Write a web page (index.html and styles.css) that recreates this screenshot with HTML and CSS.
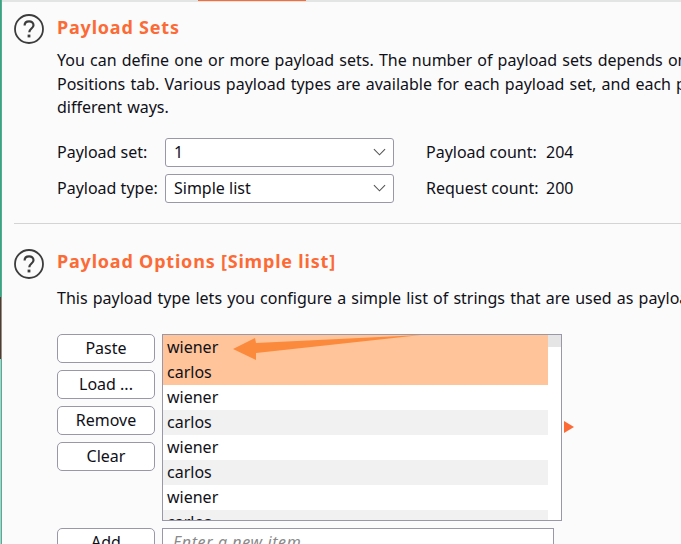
FILE: index.html
```html
<!DOCTYPE html>
<html lang="en">
<head>
    <meta charset="UTF-8">
    <meta name="viewport" content="width=device-width, initial-scale=1.0">
    <title>Payload Sets</title>
    <link rel="stylesheet" href="styles.css">
</head>
<body>
    <div class="edge">
        <div class="edge-green"></div>
        <div class="edge-red"></div>
    </div>
    <div class="main">
        <div class="top-bar"><div class="tab-mark"></div></div>

        <section class="sets">
            <div class="head">
                <svg class="help" viewBox="0 0 30 30"><circle cx="15" cy="15" r="14" fill="none" stroke="#3c3c3c" stroke-width="1.8"/><path d="M10.6 11.6c0-2.7 2-4.3 4.5-4.3s4.4 1.6 4.4 3.9c0 3.3-4.2 3.4-4.2 7" fill="none" stroke="#3c3c3c" stroke-width="2.2"/><rect x="13.6" y="20.6" width="2.8" height="2.8" fill="#3c3c3c"/></svg>
                <h2>Payload Sets</h2>
            </div>
            <p class="text">You can define one or more payload sets. The number of payload sets depends on<br>Positions tab. Various payload types are available for each payload set, and each p<br>different ways.</p>
            <div class="form">
                <div class="form-row">
                    <span class="label">Payload set:</span>
                    <div class="select"><span>1</span><svg class="chev" viewBox="0 0 14 8"><path d="M1 1l6 6 6-6" fill="none" stroke="#555" stroke-width="1.2"/></svg></div>
                    <span class="count-label">Payload count:</span>
                    <span>204</span>
                </div>
                <div class="form-row">
                    <span class="label">Payload type:</span>
                    <div class="select"><span>Simple list</span><svg class="chev" viewBox="0 0 14 8"><path d="M1 1l6 6 6-6" fill="none" stroke="#555" stroke-width="1.2"/></svg></div>
                    <span class="count-label">Request count:</span>
                    <span>200</span>
                </div>
            </div>
        </section>

        <section class="options">
            <div class="head">
                <svg class="help" viewBox="0 0 30 30"><circle cx="15" cy="15" r="14" fill="none" stroke="#3c3c3c" stroke-width="1.8"/><path d="M10.6 11.6c0-2.7 2-4.3 4.5-4.3s4.4 1.6 4.4 3.9c0 3.3-4.2 3.4-4.2 7" fill="none" stroke="#3c3c3c" stroke-width="2.2"/><rect x="13.6" y="20.6" width="2.8" height="2.8" fill="#3c3c3c"/></svg>
                <h2>Payload Options [Simple list]</h2>
            </div>
            <p class="text text-options">This payload type lets you configure a simple list of strings that are used as payloa</p>
            <div class="editor">
                <div class="buttons">
                    <button class="btn">Paste</button>
                    <button class="btn">Load ...</button>
                    <button class="btn">Remove</button>
                    <button class="btn">Clear</button>
                </div>
                <div class="list">
                    <div class="rows">
                        <div class="row sel">wiener</div>
                        <div class="row sel">carlos</div>
                        <div class="row">wiener</div>
                        <div class="row alt">carlos</div>
                        <div class="row">wiener</div>
                        <div class="row alt">carlos</div>
                        <div class="row">wiener</div>
                        <div class="row alt">carlos</div>
                    </div>
                    <div class="scroll"><div class="thumb"></div></div>
                    <svg class="arrow" viewBox="0 0 190 30"><polygon points="70,14 92,3 93,8 258,0 93,18 93,25" fill="#fb8a3c"/></svg>
                </div>
                <div class="marker"></div>
            </div>
            <div class="add-row">
                <button class="btn">Add</button>
                <div class="new-item">Enter a new item</div>
            </div>
        </section>
    </div>
</body>
</html>
```

FILE: styles.css
```css
html, body {
    margin: 0;
    padding: 0;
    height: 100%;
    overflow: hidden;
}
body {
    display: flex;
    height: 544px;
    background: #fbfbfb;
    color: #101018;
    font-family: "Noto Sans", "Open Sans", sans-serif;
    font-size: 16px;
}
.edge {
    width: 1px;
    flex: none;
    display: flex;
    flex-direction: column;
    border-right: 1px solid #3fb59c;
    background: #bfc7c4;
}
.edge-green { height: 297px; background: #4f9a78; }
.edge-red { height: 62px; background: #a5161c; }
.main {
    flex: 1;
    min-width: 0;
    overflow: hidden;
}
.top-bar {
    height: 2px;
    background: #e3e5e4;
    padding-left: 196px;
}
.tab-mark { width: 108px; height: 1px; background: #fc6a35; }

.sets {
    margin-left: 12px;
    padding: 12px 0 20px;
    border-bottom: 1px solid #d4d4d4;
}
.options { margin-left: 12px; padding-top: 25px; }
.head {
    display: flex;
    align-items: center;
    gap: 13px;
    height: 30px;
}
.help { width: 30px; height: 30px; flex: none; }
.head h2 {
    margin: 0 0 5px;
    font-size: 18px;
    font-weight: 700;
    letter-spacing: 0.8px;
    color: #fc6a35;
}
.text {
    margin: 5px 0 0 43px;
    line-height: 23.5px;
    white-space: nowrap;
    word-spacing: 1px;
}
.text-options { margin-top: 8px; }

.form { margin: 18px 0 0 43px; display: flex; flex-direction: column; gap: 7px; }
.form-row { display: flex; align-items: center; height: 29px; }
.label { width: 108px; flex: none; }
.select {
    width: 229px;
    height: 29px;
    box-sizing: border-box;
    flex: none;
    display: flex;
    align-items: center;
    justify-content: space-between;
    padding: 0 7px 0 8px;
    background: #fff;
    border: 1px solid #9a98a8;
    border-radius: 3px;
}
.chev { width: 13px; height: 8px; }
.count-label { width: 120px; margin-left: 32px; flex: none; }

.editor { display: flex; margin: 24px 0 0 43px; }
.buttons { width: 98px; display: flex; flex-direction: column; gap: 7px; flex: none; }
.btn {
    width: 98px;
    height: 29px;
    padding: 0 0 2px;
    background: #fff;
    color: #101018;
    font: inherit;
    border: 1px solid #9a98a8;
    border-radius: 5px;
}
.list {
    position: relative;
    width: 400px;
    height: 187px;
    margin-left: 7px;
    box-sizing: border-box;
    display: flex;
    flex: none;
    background: #fff;
    border: 1px solid #9a98a8;
    overflow: hidden;
}
.rows { width: 385px; flex: none; }
.row { height: 25px; line-height: 25px; padding-left: 4px; }
.row.alt { background: #f1f1f1; }
.row.sel { background: #ffc499; }
.scroll { flex: 1; }
.thumb { height: 12px; background: #e5e5e5; }
.arrow {
    position: absolute;
    left: 0;
    top: 0;
    width: 190px;
    height: 30px;
    overflow: visible;
}
.marker {
    align-self: flex-start;
    margin: 87px 0 0 2px;
    border-left: 10px solid #fc6a35;
    border-top: 6.5px solid transparent;
    border-bottom: 6.5px solid transparent;
}
.add-row { display: flex; gap: 7px; margin: 7px 0 0 43px; }
.new-item {
    width: 392px;
    height: 29px;
    box-sizing: border-box;
    padding: 0 10px;
    line-height: 27px;
    background: #fff;
    border: 1px solid #9a98a8;
    color: #8a8a8a;
    font-style: italic;
    letter-spacing: 0.6px;
}
```
